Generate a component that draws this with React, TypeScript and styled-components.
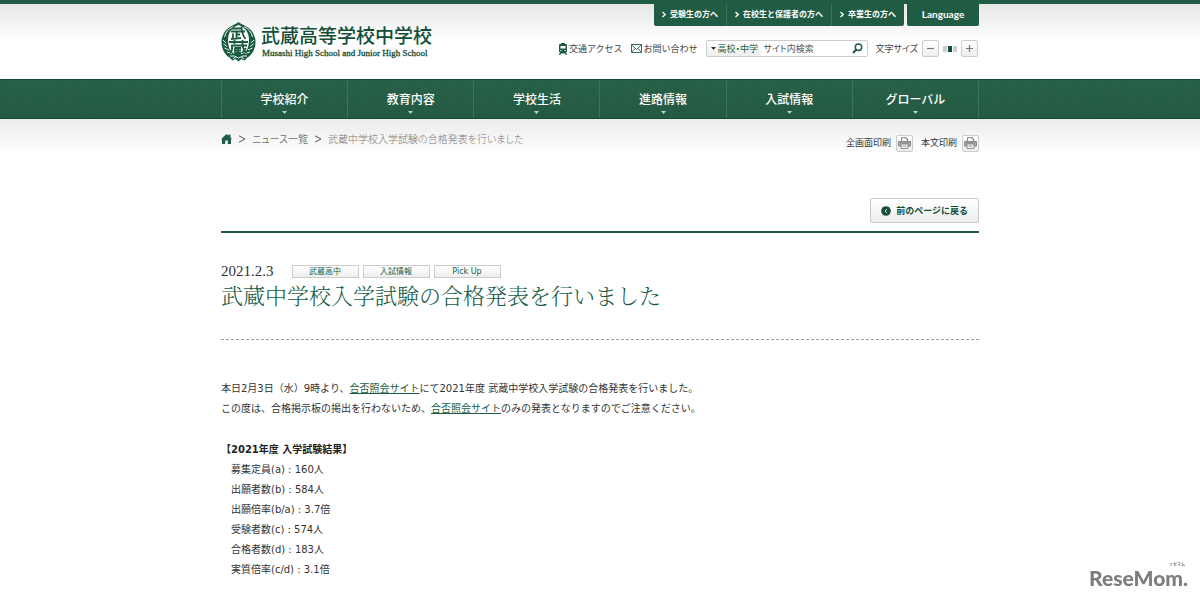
import React from "react";
import styled, { createGlobalStyle } from "styled-components";

const green = "#205c44";
const sans = `"Noto Sans CJK JP", "Noto Sans", sans-serif`;

const GlobalStyle = createGlobalStyle`
  *, *::before, *::after { box-sizing: border-box; }
  body {
    margin: 0;
    background: #fff;
    color: #333;
    font: 10px/20px "DejaVu Sans", ${sans};
  }
  h1, h2, p, ul, ol, dl { margin: 0; padding: 0; }
  ul, ol { list-style: none; }
  button, input, select { font: inherit; color: inherit; margin: 0; }
`;

const Container = styled.div`
  width: 100%;
  max-width: 758px;
  margin: 0 auto;
`;

const Header = styled.header`
  border-top: 4px solid ${green};
  background: linear-gradient(#e6e6e6, #fff 36px);
  font-family: ${sans};
`;

const HeaderInner = styled(Container)`
  display: flex;
  justify-content: space-between;
  min-height: 75px;
`;

const Brand = styled.a`
  display: flex;
  gap: 5px;
  padding-top: 18px;
  color: #124f37;
  text-decoration: none;
`;

const BrandText = styled.span`
  display: flex;
  flex-direction: column;
  gap: 1px;
  padding-top: 2px;
`;

const BrandName = styled.span`
  font-size: 19px;
  line-height: 22px;
  font-weight: 500;
`;

const BrandLatin = styled.span`
  padding-left: 1px;
  font: 9px/12px "Liberation Serif", serif;
  -webkit-text-stroke: 0.3px currentColor;
`;

const HeaderSide = styled.div`
  display: flex;
  flex-direction: column;
  align-items: flex-end;
  gap: 14px;
`;

const AudienceNav = styled.nav`
  display: flex;
  gap: 3px;
`;

const AudienceList = styled.ul`
  display: flex;
  background: ${green};
  border-radius: 0 0 2px 2px;
  li + li { border-left: 1px solid #3b735c; }
`;

const AudienceLink = styled.a`
  display: flex;
  align-items: center;
  gap: 4px;
  height: 22px;
  padding: 0 8px 2px;
  color: #fff;
  font-size: 8px;
  font-weight: 700;
  text-decoration: none;
`;

const LanguageButton = styled.button`
  width: 72px;
  height: 22px;
  padding: 0 0 2px;
  border: 0;
  border-radius: 0 0 2px 2px;
  background: ${green};
  color: #fff;
  font: bold 10px/20px Lato, sans-serif;
`;

const Tools = styled.div`
  display: flex;
  align-items: center;
  gap: 8px;
  color: #444;
  font-size: 9px;
  line-height: 17px;
`;

const ToolLink = styled.a`
  display: flex;
  align-items: center;
  gap: 2px;
  color: inherit;
  text-decoration: none;
`;

const Search = styled.form`
  display: flex;
  align-items: center;
  width: 162px;
  height: 17px;
  border: 1px solid #ccc;
  border-radius: 2px;
  background: #fff;
  overflow: hidden;
`;

const ScopeField = styled.label`
  display: flex;
  align-items: center;
  gap: 2px;
  height: 100%;
  padding: 0 0 0 4px;
  background: linear-gradient(#fff, #eee);
`;

const ScopeSelect = styled.select`
  appearance: none;
  width: 43px;
  padding: 0;
  border: 0;
  background: none;
  color: ${green};
  font-size: 9px;
  line-height: 15px;
  font-feature-settings: "palt";
`;

const SearchInput = styled.input`
  flex: 1;
  min-width: 0;
  padding: 0 3px;
  border: 0;
  outline: 0;
  background: none;
  font-size: 9px;
  line-height: 15px;
  font-feature-settings: "palt";
  &::placeholder { color: #555; opacity: 1; }
`;

const PlainButton = styled.button`
  display: flex;
  padding: 0 4px;
  border: 0;
  background: none;
`;

const SizeControl = styled.div`
  display: flex;
  align-items: center;
  gap: 4px;
  padding-right: 1px;
  font-feature-settings: "palt";
`;

const IconButton = styled.button`
  display: flex;
  align-items: center;
  justify-content: center;
  width: 17px;
  height: 17px;
  padding: 0;
  border: 1px solid #ccc;
  border-radius: 2px;
  background: linear-gradient(#fff, #eee);
`;

const Steps = styled.span`
  display: flex;
  gap: 1px;
`;

const Step = styled.span<{ $on?: boolean }>`
  width: 4px;
  height: 6px;
  background: ${(p) => (p.$on ? "#124f37" : "#ccc")};
`;

const MainNav = styled.nav`
  border-top: 1px solid #174833;
  border-bottom: 1px solid #174833;
  background: repeating-linear-gradient(45deg, #ffffff06 0 1px, transparent 1px 3px),
    linear-gradient(#265f47, #225841);
  font-family: ${sans};
`;

const NavList = styled.ul`
  display: grid;
  grid-template-columns: repeat(6, 1fr);
  border-right: 1px solid #3b735c;
  li { border-left: 1px solid #3b735c; }
`;

const NavLink = styled.a`
  display: flex;
  flex-direction: column;
  align-items: center;
  gap: 2px;
  height: 38px;
  padding-top: 9px;
  color: #fff;
  font-size: 12px;
  line-height: 20px;
  font-weight: 500;
  text-decoration: none;
`;

const Body = styled.div`
  background: linear-gradient(#ebebeb, #fff 34px);
`;

const TopRow = styled.div`
  display: flex;
  justify-content: space-between;
  align-items: flex-start;
  padding-top: 10px;
  font-family: ${sans};
`;

const Crumbs = styled.ol`
  display: flex;
  align-items: center;
  gap: 6px;
  color: #777;
  font-feature-settings: "palt";
  font-weight: 300;
  a { display: flex; color: #333; text-decoration: none; }
`;

const PrintTools = styled.div`
  display: flex;
  gap: 8px;
  padding-top: 5px;
`;

const PrintLabel = styled.label`
  display: flex;
  align-items: center;
  gap: 5px;
  font-size: 9px;
  line-height: 18px;
`;

const BackRow = styled.div`
  display: flex;
  justify-content: flex-end;
  margin-top: 46px;
  padding-bottom: 8px;
  border-bottom: 2px solid #1e5944;
`;

const BackButton = styled.button`
  display: flex;
  align-items: center;
  gap: 5px;
  height: 25px;
  padding: 0 10px;
  border: 1px solid #c8c8c8;
  border-radius: 2px;
  background: linear-gradient(#fff, #ededed);
  color: #124f37;
  font: bold 9px/20px ${sans};
`;

const ArticleHead = styled.header`
  padding: 30px 0 28px;
  border-bottom: 1px dashed #8fa89d;
`;

const Meta = styled.div`
  display: flex;
  align-items: center;
  gap: 18px;
  height: 16px;
`;

const PostDate = styled.time`
  font: 15px/16px "Liberation Serif", serif;
`;

const Tags = styled.ul`
  display: flex;
  gap: 4px;
`;

const Tag = styled.a`
  display: block;
  width: 67px;
  border: 1px solid #ccc;
  background: linear-gradient(#fff, #eee);
  color: ${green};
  font-size: 8px;
  line-height: 11px;
  text-align: center;
  text-decoration: none;
`;

const Title = styled.h1`
  color: ${green};
  font: 300 22px/32px "Noto Serif CJK JP", ${sans};
`;

const Article = styled.article`
  padding: 39px 0 20px;
`;

const Paragraph = styled.p`
  a { color: ${green}; }
`;

const ResultTitle = styled.h2`
  margin-top: 21px;
  font-size: 10px;
  line-height: 20px;
  color: #222;
`;

const Results = styled.ul`
  padding-left: 10px;
`;

const Watermark = styled.div`
  position: fixed;
  right: 12px;
  bottom: 12px;
  display: flex;
  flex-direction: column;
  align-items: flex-end;
  color: #7d7d7d;
  font: 900 21px/22px Lato, sans-serif;
`;

const Ruby = styled.span`
  padding-right: 3px;
  font: bold 4px/6px ${sans};
`;

const Emblem = () => (
  <svg width="35" height="40" viewBox="0 0 35 40" role="img" aria-label="校章">
    <path d="M17.500 0C20 2.500 24 3 27 5.500C32 9 34.500 15 34.500 20C34.500 27 31 33 26.500 35.500L23.500 38.500L20.500 37L17.500 39.500L14.500 37L11.500 38.500L8.500 35.500C4 33 .5 27 .5 20C.5 15 3 9 8 5.500C11 3 15 2.500 17.500 0Z" fill="#195c40" />
    <path d="M17.500 3C24 5.500 28 10 28 18C28 25 26 30 21 32H14C9 30 7 25 7 18C7 10 11 5.500 17.500 3Z" fill="#fff" />
    <g fill="none" stroke="#fff" strokeWidth=".9">
      <path d="M3.500 15Q5 8 12 4.500M31.500 15Q30 8 23 4.500" />
      <path d="M2 18L5 21M2.500 22L6 24.500M3.500 26L8 28M6 30L11 31.500M33 18L30 21M32.500 22L29 24.500M31.500 26L27 28M29 30L24 31.500" />
      <path d="M9 34Q13 33 17.500 36Q22 33 26 34M12 37L15 34.500M23 37L20 34.500" />
    </g>
    <g fill="none" stroke="#195c40" strokeWidth="1.800">
      <path d="M11 6.500H20M10 9.500H24M20.500 4.500Q21 13 24.500 17M15.500 9.500V16M15.500 12.500H19M12 11.500V16.500M10 17L20 16" />
      <path d="M8 20H27M13.500 18V22M21.500 18V22M10 23.500H26M11 23.500V28L9.500 31M13.500 26H20M13.500 28.500H20M13.500 31H20M14 25.500V31M17 25.500V31M21.500 22Q22 28 25.500 31M25 26L21 31" />
    </g>
  </svg>
);

const Chevron = () => (
  <svg width="4" height="7" viewBox="0 0 4 7" fill="none" stroke="#fff" strokeWidth="1.300" aria-hidden="true">
    <path d="M.5 1L3.200 3.500L.5 6" />
  </svg>
);

const Train = () => (
  <svg width="8" height="12" viewBox="0 0 8 12" aria-hidden="true">
    <path d="M2 0H6V1H7Q8 1 8 2V9H7L8 12H7L6 10.500H2L1 12H0L1 9H0V2Q0 1 1 1H2Z" fill={green} />
    <path d="M1.500 3H6.500V5.500H1.500ZM1.300 7H2.500V8H1.300ZM5.500 7H6.700V8H5.500Z" fill="#fff" />
  </svg>
);

const Mail = () => (
  <svg width="11" height="9" viewBox="0 0 11 9" fill="none" stroke={green} aria-hidden="true">
    <path d="M.5.5H10.500V8.500H.5ZM.5.8L5.500 5.500L10.500.8M.8 8L4 4.500M10.200 8L7 4.500" strokeWidth=".9" />
  </svg>
);

const Magnifier = () => (
  <svg width="11" height="11" viewBox="0 0 11 11" fill="none" stroke={green} aria-hidden="true">
    <circle cx="6.500" cy="4.300" r="3.200" strokeWidth="1.500" />
    <path d="M4.200 6.700L1 10" strokeWidth="2" />
  </svg>
);

const Triangle = ({ color = "#333" }: { color?: string }) => (
  <svg width="5" height="3" viewBox="0 0 5 3" aria-hidden="true">
    <path d="M0 0H5L2.500 3Z" fill={color} />
  </svg>
);

const Sign = ({ plus }: { plus?: boolean }) => (
  <svg width="7" height="7" viewBox="0 0 7 7" stroke="#777" aria-hidden="true">
    <path d={plus ? "M0 3.500H7M3.500 0V7" : "M0 3.500H7"} strokeWidth="1.200" />
  </svg>
);

const Home = () => (
  <svg width="11" height="10" viewBox="0 0 11 10" aria-hidden="true">
    <path d="M5.500 0L7.500 1.700V.5H9.500V3.500L11 5.200H10V10H6.800V6.500H4.200V10H1V5.200H0Z" fill={green} />
  </svg>
);

const Printer = () => (
  <svg width="13" height="12" viewBox="0 0 13 12" fill="none" stroke="#888" aria-hidden="true">
    <path d="M3.500 4V.6H8L9.500 2V4M8 .6V2H9.500" />
    <path d="M.5 4.500H12.500V9H.5Z" fill="#aaa" />
    <path d="M3 7H10V11.400H3Z" fill="#fff" />
    <path d="M4.500 9H8.500M2 6H11" />
  </svg>
);

const BackIcon = () => (
  <svg width="10" height="10" viewBox="0 0 10 10" aria-hidden="true">
    <circle cx="5" cy="5" r="4.800" fill="#174f39" />
    <path d="M6 3L4 5L6 7" fill="none" stroke="#cfe0d8" />
  </svg>
);

const Angle = () => (
  <svg width="8" height="8" viewBox="0 0 8 8" fill="none" stroke="#555" aria-hidden="true">
    <path d="M1 .8L7 4L1 7.200" />
  </svg>
);

const audiences = ["受験生の方へ", "在校生と保護者の方へ", "卒業生の方へ"];
const sections = ["学校紹介", "教育内容", "学校生活", "進路情報", "入試情報", "グローバル"];
const tags = ["武蔵高中", "入試情報", "Pick Up"];
const results = [
  "募集定員(a) : 160人",
  "出願者数(b) : 584人",
  "出願倍率(b/a) : 3.7倍",
  "受験者数(c) : 574人",
  "合格者数(d) : 183人",
  "実質倍率(c/d) : 3.1倍",
];

export default function App() {
  return (
    <>
      <GlobalStyle />
      <Header>
        <HeaderInner>
          <Brand href="#">
            <Emblem />
            <BrandText>
              <BrandName>武蔵高等学校中学校</BrandName>
              <BrandLatin>Musashi High School and Junior High School</BrandLatin>
            </BrandText>
          </Brand>
          <HeaderSide>
            <AudienceNav>
              <AudienceList>
                {audiences.map((label) => (
                  <li key={label}>
                    <AudienceLink href="#"><Chevron />{label}</AudienceLink>
                  </li>
                ))}
              </AudienceList>
              <LanguageButton type="button">Language</LanguageButton>
            </AudienceNav>
            <Tools>
              <ToolLink href="#"><Train />交通アクセス</ToolLink>
              <ToolLink href="#"><Mail />お問い合わせ</ToolLink>
              <Search>
                <ScopeField>
                  <Triangle />
                  <ScopeSelect aria-label="検索対象"><option>高校・中学</option></ScopeSelect>
                </ScopeField>
                <SearchInput aria-label="サイト内検索" placeholder="サイト内検索" />
                <PlainButton type="button" aria-label="検索"><Magnifier /></PlainButton>
              </Search>
              <SizeControl>
                文字サイズ
                <IconButton type="button" aria-label="小さく"><Sign /></IconButton>
                <Steps><Step /><Step $on /><Step /></Steps>
                <IconButton type="button" aria-label="大きく"><Sign plus /></IconButton>
              </SizeControl>
            </Tools>
          </HeaderSide>
        </HeaderInner>
      </Header>
      <MainNav>
        <Container>
          <NavList>
            {sections.map((label) => (
              <li key={label}>
                <NavLink href="#">{label}<Triangle color="#b9d3c7" /></NavLink>
              </li>
            ))}
          </NavList>
        </Container>
      </MainNav>
      <Body>
        <Container as="main">
          <TopRow>
            <Crumbs>
              <li><a href="#" aria-label="ホーム"><Home /></a></li>
              <li aria-hidden="true"><Angle /></li>
              <li><a href="#">ニュース一覧</a></li>
              <li aria-hidden="true"><Angle /></li>
              <li>武蔵中学校入学試験の合格発表を行いました</li>
            </Crumbs>
            <PrintTools>
              <PrintLabel>全画面印刷<IconButton type="button"><Printer /></IconButton></PrintLabel>
              <PrintLabel>本文印刷<IconButton type="button"><Printer /></IconButton></PrintLabel>
            </PrintTools>
          </TopRow>
          <BackRow>
            <BackButton type="button"><BackIcon />前のページに戻る</BackButton>
          </BackRow>
          <ArticleHead>
            <Meta>
              <PostDate dateTime="2021-02-03">2021.2.3</PostDate>
              <Tags>
                {tags.map((tag) => <li key={tag}><Tag href="#">{tag}</Tag></li>)}
              </Tags>
            </Meta>
            <Title>武蔵中学校入学試験の合格発表を行いました</Title>
          </ArticleHead>
          <Article>
            <Paragraph>
              本日2月3日（水）9時より、<a href="#">合否照会サイト</a>にて2021年度 武蔵中学校入学試験の合格発表を行いました。
            </Paragraph>
            <Paragraph>
              この度は、合格掲示板の掲出を行わないため、<a href="#">合否照会サイト</a>のみの発表となりますのでご注意ください。
            </Paragraph>
            <ResultTitle>【2021年度 入学試験結果】</ResultTitle>
            <Results>
              {results.map((row) => <li key={row}>{row}</li>)}
            </Results>
          </Article>
        </Container>
      </Body>
      <Watermark><Ruby>リセマム</Ruby>ReseMom.</Watermark>
    </>
  );
}
